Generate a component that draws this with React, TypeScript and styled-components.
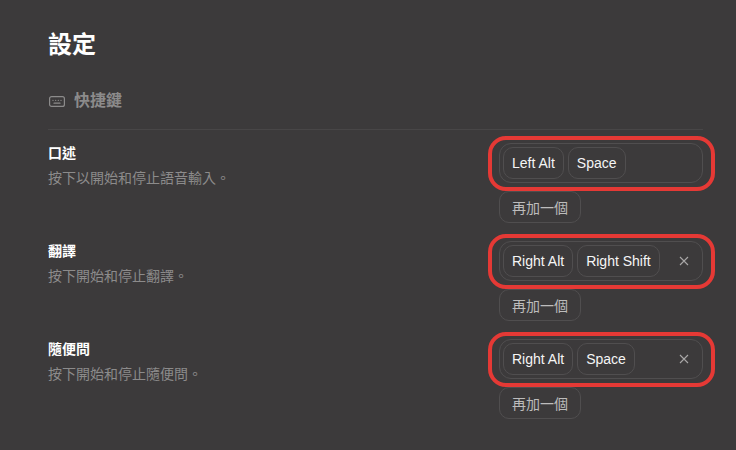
import { createGlobalStyle, styled } from "styled-components"

const GlobalStyle = createGlobalStyle`
html, body {
    margin: 0;
    padding: 0;
    height: 100%;
    background-color: #3c3a3b;
}
body {
    font-family: "Liberation Sans", "Noto Sans CJK TC", sans-serif;
    overflow: hidden;
}
`

const shortcuts = [
    { title: "口述", text: "按下以開始和停止語音輸入。", keys: ["Left Alt", "Space"], clearable: false },
    { title: "翻譯", text: "按下開始和停止翻譯。", keys: ["Right Alt", "Right Shift"], clearable: true },
    { title: "隨便問", text: "按下開始和停止隨便問。", keys: ["Right Alt", "Space"], clearable: true },
]

const KeyboardIcon = () => (
    <svg width="17" height="16" viewBox="0 0 17 16" fill="none" stroke="#8c8b8b" strokeWidth="1.2" strokeLinecap="round">
        <rect x="1.6" y="3.6" width="14.8" height="9.8" rx="2" />
        <path d="M5 7.4h.01M7.7 7.4h.01M10.3 7.4h.01M13 7.4h.01M6 10.2h6" />
    </svg>
)

const CloseIcon = () => (
    <svg width="10" height="10" viewBox="0 0 10 10" fill="none" stroke="#a9a8a8" strokeWidth="1.1">
        <path d="M1 1l8 8M9 1l-8 8" />
    </svg>
)

export default function App() {
    return (
        <Page>
            <GlobalStyle />
            <Title>設定</Title>
            <SectionHead>
                <KeyboardIcon />
                <SectionTitle>快捷鍵</SectionTitle>
            </SectionHead>
            <Rows>
                {shortcuts.map((item) => (
                    <Row key={item.title}>
                        <Info>
                            <Label>{item.title}</Label>
                            <Description>{item.text}</Description>
                        </Info>
                        <Controls>
                            <KeyField>
                                {item.keys.map((key) => (
                                    <KeyChip key={key}>{key}</KeyChip>
                                ))}
                                {item.clearable && (
                                    <ClearButton>
                                        <CloseIcon />
                                    </ClearButton>
                                )}
                                <Highlight />
                            </KeyField>
                            <AddButton>再加一個</AddButton>
                        </Controls>
                    </Row>
                ))}
            </Rows>
        </Page>
    )
}

const Page = styled.div`
height: 450px;
box-sizing: border-box;
padding: 29px 33px 0 48px;
overflow: hidden;
background-color: #3c3a3b;
`
const Title = styled.h1`
margin: 0 0 25px;
color: #ffffff;
font-size: 24px;
font-weight: 700;
line-height: 32px;
`
const SectionHead = styled.div`
display: flex;
align-items: center;
gap: 9px;
height: 29px;
padding-bottom: 14px;
border-bottom: 1px solid #484647;
`
const SectionTitle = styled.h2`
margin: 0;
color: #8c8b8b;
font-size: 16px;
font-weight: 700;
line-height: 24px;
`
const Rows = styled.div`
display: flex;
flex-direction: column;
gap: 18px;
margin-top: 13px;
`
const Row = styled.div`
display: flex;
justify-content: space-between;
align-items: flex-start;
`
const Info = styled.div`
display: flex;
flex-direction: column;
gap: 5px;
`
const Label = styled.span`
color: #ffffff;
font-size: 14px;
font-weight: 700;
line-height: 20px;
`
const Description = styled.span`
color: #8c8b8b;
font-size: 14px;
line-height: 20px;
`
const Controls = styled.div`
display: flex;
flex-direction: column;
align-items: flex-start;
gap: 8px;
width: 204px;
`
const KeyField = styled.div`
position: relative;
display: flex;
align-items: center;
gap: 4px;
width: 100%;
height: 40px;
box-sizing: border-box;
padding: 0 3px;
border: 1px solid #504e4f;
border-radius: 12px;
`
const KeyChip = styled.span`
display: flex;
align-items: center;
height: 32px;
box-sizing: border-box;
padding: 0 8px;
border: 1px solid #504e4f;
border-radius: 10px;
color: #f5f5f5;
font-size: 14px;
white-space: nowrap;
`
const ClearButton = styled.button`
display: flex;
align-items: center;
justify-content: center;
margin-left: auto;
margin-right: 7px;
padding: 0;
width: 16px;
height: 16px;
border: none;
background: transparent;
`
const Highlight = styled.div`
position: absolute;
top: -8px;
right: -13px;
bottom: -9px;
left: -12px;
border: 4px solid #e53935;
border-radius: 18px;
pointer-events: none;
`
const AddButton = styled.button`
height: 32px;
box-sizing: border-box;
padding: 0 12px;
border: 1px solid #504e4f;
border-radius: 10px;
background: transparent;
color: #bdbcbc;
font-family: inherit;
font-size: 14px;
`
